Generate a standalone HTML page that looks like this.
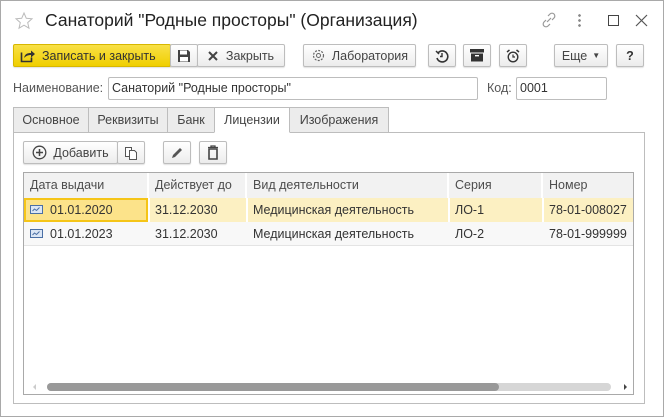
<!DOCTYPE html>
<html><head><meta charset="utf-8"><style>
*{box-sizing:border-box;margin:0;padding:0}
body{width:664px;height:417px;background:#fff;font-family:"Liberation Sans",Arial,sans-serif;font-size:12.5px;color:#333;position:relative;overflow:hidden}
.a{position:absolute}
.win{left:0;top:0;width:664px;height:417px;border:1px solid #a9a9a9}
.btn{position:absolute;height:23px;border:1px solid #bdbdbd;border-radius:2px;background:linear-gradient(#fff,#ececec);box-shadow:0 1px 1px rgba(0,0,0,.12);display:flex;align-items:center;justify-content:center;color:#444}
.tab{position:absolute;top:107px;height:26px;border:1px solid #bdbdbd;background:#ececec;display:flex;align-items:center;justify-content:center;color:#444}
.inp{position:absolute;height:23px;border:1px solid #bdbdbd;border-radius:2px;padding:3px 3px;color:#333}
.th{position:absolute;top:173px;height:25px;background:#f2f2f2;border-right:2px solid #fff;padding:5px 6px;color:#4d4d4d}
.td{position:absolute;height:24px;padding:5px 6px;color:#333}
</style></head><body>
<div class="a win"></div>
<svg class="a" style="left:14px;top:11px" width="20" height="20" viewBox="0 0 20 20"><path d="M10 2l2.3 5.3 5.7.5-4.3 3.8 1.3 5.6L10 14.2 5 17.2l1.3-5.6L2 7.8l5.7-.5z" fill="none" stroke="#bbb" stroke-width="1"/></svg>
<div class="a" style="left:45px;top:10px;font-size:17.5px;color:#222;white-space:nowrap">Санаторий "Родные просторы" (Организация)</div>
<svg class="a" style="left:540px;top:11px" width="18" height="18" viewBox="0 0 18 18"><g fill="none" stroke="#999" stroke-width="1.2"><path d="M8 5l2-2a2.8 2.8 0 014 4l-2 2"/><path d="M10 13l-2 2a2.8 2.8 0 01-4-4l2-2"/><path d="M7 11l4-4"/></g></svg>
<div class="a" style="left:578px;top:13px;width:3px;height:14px;background:radial-gradient(circle,#888 1.2px,transparent 1.5px) 0 0/3px 5px"></div>
<div class="a" style="left:608px;top:15px;width:11px;height:11px;border:1.3px solid #444"></div>
<svg class="a" style="left:635px;top:14px" width="13" height="13"><path d="M1 1l11 11M12 1L1 12" stroke="#555" stroke-width="1.2"/></svg>

<div class="btn" style="left:13px;top:44px;width:158px;background:linear-gradient(#f8e047,#f0cf00);border-color:#d7b700;color:#333;justify-content:flex-start;padding-left:6px"><svg width="16" height="14" viewBox="0 0 16 14"><path d="M1.5 3.5v9h10v-4" fill="none" stroke="#333" stroke-width="1.6"/><path d="M4 9c1-4 3-5 7-5V1.5l4 3.5-4 3.5V6c-3 0-5 1-7 3z" fill="#333"/></svg><span style="margin-left:6px">Записать и закрыть</span></div>
<div class="btn" style="left:170px;top:44px;width:28px"><svg width="14" height="14"><path d="M1 1h10l2 2v10H1z" fill="#444"/><rect x="3" y="1.5" width="7" height="4" fill="#fff"/><rect x="3" y="8" width="8" height="4.5" fill="#fff"/></svg></div>
<div class="btn" style="left:197px;top:44px;width:88px"><svg width="10" height="10"><path d="M1 1l8 8M9 1L1 9" stroke="#444" stroke-width="2"/></svg><span style="margin-left:8px">Закрыть</span></div>
<div class="btn" style="left:303px;top:44px;width:113px"><svg width="15" height="15" viewBox="0 0 15 15"><circle cx="7.5" cy="7.5" r="5" fill="none" stroke="#666" stroke-width="1.2" stroke-dasharray="2 1.3"/><circle cx="7.5" cy="7.5" r="2" fill="none" stroke="#666"/></svg><span style="margin-left:6px">Лаборатория</span></div>
<div class="btn" style="left:428px;top:44px;width:28px"><svg width="14" height="14" viewBox="0 0 14 14"><path d="M3 4a5.5 5.5 0 11-1 5" fill="none" stroke="#333" stroke-width="1.6"/><path d="M1 2l3 3" stroke="#333" stroke-width="1.5"/><path d="M7 4v3.5H5" fill="none" stroke="#333" stroke-width="1.4"/></svg></div>
<div class="btn" style="left:463px;top:44px;width:28px"><svg width="14" height="13"><rect x="0" y="0" width="14" height="3.5" fill="#333"/><rect x="1" y="4.5" width="12" height="8" fill="#333"/><rect x="5" y="6" width="4" height="1.4" fill="#fff"/></svg></div>
<div class="btn" style="left:499px;top:44px;width:28px"><svg width="14" height="14" viewBox="0 0 14 14"><circle cx="7" cy="8" r="4.8" fill="none" stroke="#333" stroke-width="1.4"/><path d="M7 5.5V8h2" fill="none" stroke="#333" stroke-width="1.2"/><path d="M1 3l2.5-2M13 3l-2.5-2" stroke="#333" stroke-width="1.5"/></svg></div>
<div class="btn" style="left:554px;top:44px;width:54px">Еще <span style="font-size:8px;margin-left:5px">▼</span></div>
<div class="btn" style="left:616px;top:44px;width:28px;font-weight:bold;color:#333">?</div>

<div class="a" style="left:13px;top:81px;color:#555">Наименование:</div>
<div class="inp" style="left:108px;top:77px;width:370px">Санаторий "Родные просторы"</div>
<div class="a" style="left:487px;top:81px;color:#555">Код:</div>
<div class="inp" style="left:516px;top:77px;width:91px">0001</div>

<div class="tab" style="left:13px;width:76px">Основное</div>
<div class="tab" style="left:88px;width:80px">Реквизиты</div>
<div class="tab" style="left:167px;width:48px">Банк</div>
<div class="tab" style="left:214px;width:76px;background:#fff;border-bottom-color:#fff;z-index:2">Лицензии</div>
<div class="tab" style="left:289px;width:100px">Изображения</div>
<div class="a" style="left:13px;top:132px;width:632px;height:272px;border:1px solid #bdbdbd"></div>

<div class="btn" style="left:23px;top:141px;width:95px"><svg width="15" height="15"><circle cx="7.5" cy="7.5" r="6.3" fill="none" stroke="#444" stroke-width="1.3"/><path d="M7.5 4v7M4 7.5h7" stroke="#444" stroke-width="1.5"/></svg><span style="margin-left:6px">Добавить</span></div>
<div class="btn" style="left:117px;top:141px;width:28px"><svg width="14" height="14"><path d="M1.5 1.5h6v9h-6z" fill="#fff" stroke="#555"/><path d="M5.5 4.5h5l2 2v7h-7z" fill="#fff" stroke="#555"/></svg></div>
<div class="btn" style="left:163px;top:141px;width:28px"><svg width="14" height="14"><path d="M2 12l1-3 7-7 2 2-7 7z" fill="#555"/></svg></div>
<div class="btn" style="left:199px;top:141px;width:28px"><svg width="14" height="15"><path d="M2 2.5h10M5 2.5V1h4v1.5" fill="none" stroke="#444" stroke-width="1.3"/><path d="M3 4h8v10H3z" fill="none" stroke="#444" stroke-width="1.6"/></svg></div>

<div class="a" style="left:23px;top:172px;width:611px;height:223px;border:1px solid #a9a9a9"></div>
<div class="th" style="left:24px;width:125px">Дата выдачи</div>
<div class="th" style="left:149px;width:98px">Действует до</div>
<div class="th" style="left:247px;width:202px">Вид деятельности</div>
<div class="th" style="left:449px;width:94px">Серия</div>
<div class="th" style="left:543px;width:90px;border-right:0">Номер</div>

<div class="a" style="left:24px;top:198px;width:609px;height:24px;background:#fcf0c2"></div>
<div class="a" style="left:24px;top:198px;width:124px;height:24px;background:#fce38a;border:2px solid #f5c518"></div>
<div class="a" style="left:148px;top:198px;width:2px;height:24px;background:#fff"></div>
<div class="a" style="left:246px;top:198px;width:2px;height:24px;background:#fff"></div>
<div class="a" style="left:448px;top:198px;width:2px;height:24px;background:#fff"></div>
<div class="a" style="left:542px;top:198px;width:2px;height:24px;background:#fff"></div>
<div class="a" style="left:24px;top:222px;width:609px;height:24px;background:#f8f8f8;border-bottom:1px solid #e4e4e4"></div>
<svg class="a" style="left:30px;top:205px" width="13" height="9"><rect x=".5" y=".5" width="12" height="8" fill="#dbe6f5" stroke="#4a6fa5"/><path d="M2.5 6l2-2 2 1.5 3-3" fill="none" stroke="#4a6fa5"/></svg>
<svg class="a" style="left:30px;top:229px" width="13" height="9"><rect x=".5" y=".5" width="12" height="8" fill="#dbe6f5" stroke="#4a6fa5"/><path d="M2.5 6l2-2 2 1.5 3-3" fill="none" stroke="#4a6fa5"/></svg>
<div class="td" style="left:44px;top:198px">01.01.2020</div>
<div class="td" style="left:149px;top:198px">31.12.2030</div>
<div class="td" style="left:247px;top:198px">Медицинская деятельность</div>
<div class="td" style="left:449px;top:198px">ЛО-1</div>
<div class="td" style="left:543px;top:198px">78-01-008027</div>
<div class="td" style="left:44px;top:222px">01.01.2023</div>
<div class="td" style="left:149px;top:222px">31.12.2030</div>
<div class="td" style="left:247px;top:222px">Медицинская деятельность</div>
<div class="td" style="left:449px;top:222px">ЛО-2</div>
<div class="td" style="left:543px;top:222px">78-01-999999</div>

<div class="a" style="left:47px;top:383px;width:564px;height:8px;border-radius:4px;background:#d6d6d6"></div>
<div class="a" style="left:47px;top:383px;width:452px;height:8px;border-radius:4px;background:#999"></div>
<div class="a" style="left:33px;top:384px;width:0;height:0;border:3px solid transparent;border-right:3px solid #ccc;border-left:0"></div>
<div class="a" style="left:624px;top:384px;width:0;height:0;border:3px solid transparent;border-left:3px solid #444;border-right:0"></div>
</body></html>
